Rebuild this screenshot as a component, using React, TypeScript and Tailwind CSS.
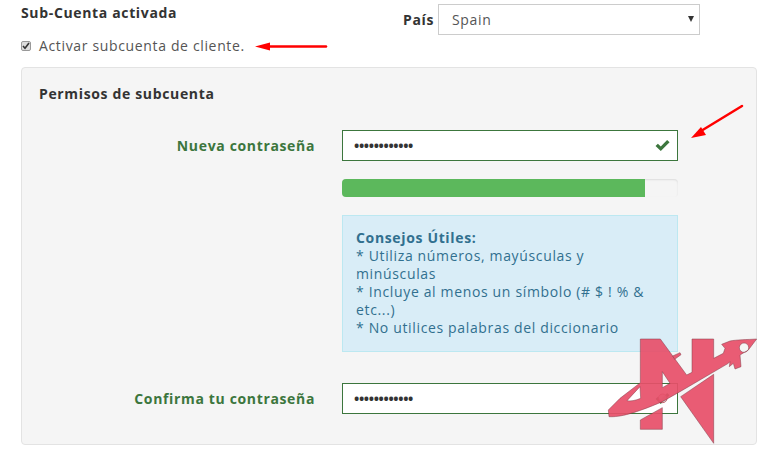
const font = { fontFamily: '"Open Sans", sans-serif' };

function Check({ className }: { className: string }) {
  return (
    <svg className={className} viewBox="0 0 14 12">
      <path d="M0.5 6.5l2.2-2.2 2.7 2.6L11.3 0.8l2.3 2.2-8.2 8.2z" fill="#3c763d" />
    </svg>
  );
}

function Logo() {
  return (
    <svg className="absolute left-[600px] top-[330px] w-[168px] h-[124px]" viewBox="0 0 504 372">
      <circle cx="188" cy="205" r="13" fill="#c9ccc9" stroke="#b9404f" strokeWidth="3" opacity="0.8" />
      <g fill="#e8506a" stroke="#7a2c3a" strokeWidth="1.5" opacity="0.92">
        <path
          fillRule="evenodd"
          d="M470 27C440 29 410 29 390 33L365 43L375 55L370 70L341 85V27H276V127L260 135L181 27H121V158L60 205L25 240L27 260C60 262 105 250 187 215L240 185L385 100L390 95L388 110L400 100L405 117L423 110L420 75L445 60ZM432 39A14 14 0 1 0 432.1 67A14 14 0 1 0 432 39ZM187 125L210 160L187 173ZM81 212L120 170L122 205C105 212 92 214 81 212Z"
        />
        <path d="M121 270L187 233V298H121Z" />
        <path d="M242 200L341 133V340Z" />
        <path d="M218 78L240 68L243 74L224 88Z" />
      </g>
    </svg>
  );
}

export default function App() {
  return (
    <div className="relative w-[768px] h-[454px] bg-white overflow-hidden text-[14px] leading-[18px] tracking-[0.65px] text-[#333]" style={font}>
      <div className="flex pl-[21px] pr-[68px] pt-[4px]">
        <div className="w-[382px]">
          <div className="font-bold leading-[18px]">Sub-Cuenta activada</div>
          <div className="flex items-center mt-[15px] text-[#555]">
            <span className="w-[10px] h-[10px] mr-[8px] rounded-[2px] border border-[#999] bg-[#ddd] flex items-center justify-center">
              <svg className="w-[8px] h-[8px]" viewBox="0 0 8 8"><path d="M1 4l2 2.2L7 1" fill="none" stroke="#333" strokeWidth="1.6" /></svg>
            </span>
            Activar subcuenta de cliente.
          </div>
        </div>
        <div className="flex-1 flex items-start">
          <span className="font-bold w-[35px] mt-[7px]">País</span>
          <div className="relative w-[262px] h-[31px] border border-[#ccc] bg-white pl-[13px] flex items-center text-[#555]">
            Spain
            <span className="absolute right-[5px] top-[11px] w-0 h-0 border-x-[3px] border-x-transparent border-t-[6px] border-t-[#333]" />
          </div>
        </div>
      </div>

      <div className="ml-[21px] mr-[11px] mt-[12px] h-[378px] bg-[#f5f5f5] border border-[#e3e3e3] rounded-[4px] pl-[17px] pt-[17px]">
        <div className="font-bold leading-[18px]">Permisos de subcuenta</div>

        <div className="flex mt-[27px]">
          <div className="w-[276px] text-right font-bold text-[#3c763d] pt-[7px]">Nueva contraseña</div>
          <div className="ml-[27px] w-[336px]">
            <div className="relative h-[31px] border border-[#3c763d] bg-white pl-[11px] flex items-center">
              <span className="tracking-[-0.35px] font-bold text-[#333]">••••••••••••</span>
              <Check className="absolute right-[7px] top-[8px] w-[15px] h-[13px]" />
            </div>
            <div className="mt-[18px] h-[18px] bg-[#f5f5f5] rounded-[4px] overflow-hidden shadow-[inset_0_1px_2px_rgba(0,0,0,0.1)]">
              <div className="h-full w-[303px] bg-[#5cb85c]" />
            </div>
            <div className="mt-[18px] h-[137px] bg-[#d9edf7] border border-[#bce8f1] text-[#31708f] px-[13px] pt-[13px]">
              <div className="font-bold">Consejos Útiles:</div>
              <div>* Utiliza números, mayúsculas y minúsculas</div>
              <div>* Incluye al menos un símbolo (# $ ! % &amp; etc...)</div>
              <div>* No utilices palabras del diccionario</div>
            </div>
          </div>
        </div>

        <div className="flex mt-[31px]">
          <div className="w-[276px] text-right font-bold text-[#3c763d] pt-[7px]">Confirma tu contraseña</div>
          <div className="ml-[27px] w-[336px]">
            <div className="relative h-[31px] border border-[#3c763d] bg-white pl-[11px] flex items-center">
              <span className="tracking-[-0.35px] font-bold text-[#333]">••••••••••••</span>
              <Check className="absolute right-[7px] top-[8px] w-[15px] h-[13px]" />
            </div>
          </div>
        </div>
      </div>

      <svg className="absolute left-[250px] top-[36px] w-[80px] h-[20px]" viewBox="0 0 80 20">
        <path d="M15 10.5H76" stroke="#f00" strokeWidth="2.5" strokeLinecap="round" />
        <path d="M5 10.5L20 6.5V14.5Z" fill="#f00" />
      </svg>
      <svg className="absolute left-[685px] top-[100px] w-[62px] h-[42px]" viewBox="0 0 62 42">
        <path d="M57 6L16 31" stroke="#f00" strokeWidth="2.5" strokeLinecap="round" />
        <path d="M6 38L16 27L21 35Z" fill="#f00" />
      </svg>
      <Logo />
    </div>
  );
}
